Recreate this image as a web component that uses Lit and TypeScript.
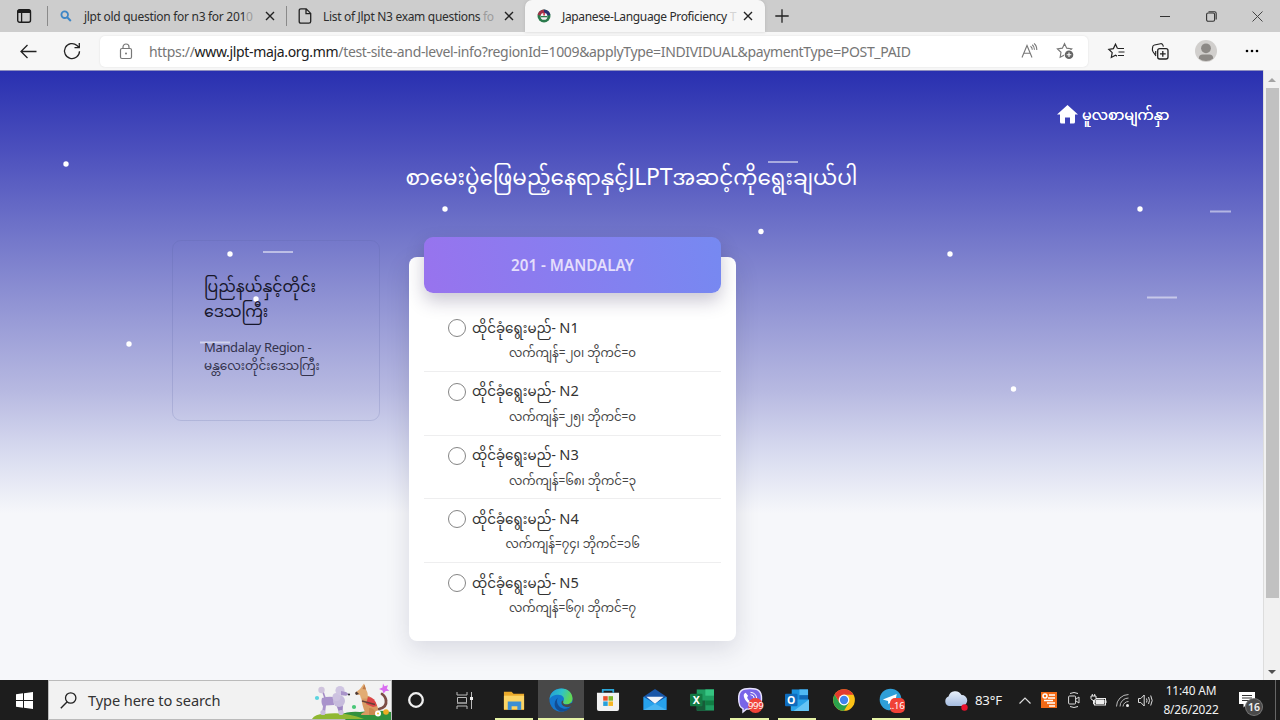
import { LitElement, html, css, svg } from "lit";
import { customElement } from "lit/decorators.js";

const base = css`
  :host, * { box-sizing: border-box; }
  svg { display: block; flex: none; overflow: visible; }
  .c { display: flex; align-items: center; justify-content: center; }
`;

const closeIcon = html`<svg width="10" height="10" viewBox="0 0 10 10"><path d="M1 1l8 8M9 1L1 9" stroke="#222" stroke-width="1.4"/></svg>`;

@customElement("browser-tabs")
class BrowserTabs extends LitElement {
  static styles = [base, css`
    :host { display: grid; grid-template-columns: 47px 1px 238px 1px 238px 240px 34px 1fr 46px 46px 46px; height: 32px; background: #cdcdcd; font: 12px "Noto Sans", sans-serif; color: #2d2d2d; align-items: center; }
    .sep { width: 1px; height: 20px; background: #8a8a8a; }
    .tab { display: grid; grid-template-columns: 36px 174px 24px; height: 32px; align-items: center; }
    .label { white-space: nowrap; }
    .fade { color: #9c9c9c; }
    .l1 { letter-spacing: -0.29px; }
    .l2 { letter-spacing: -0.31px; }
    .l3 { letter-spacing: -0.36px; padding-left: 1px; }
    .active { grid-template-columns: 37px 174px 24px; background: #f7f7f7; border-radius: 7px 7px 0 0; box-shadow: 0 0 3px #9997; }
    .active .fade { color: #d4d4d4; }
    .active .label { padding-left: 0; }
  `];
  render() {
    return html`
      <div class="c"><svg width="16" height="16" viewBox="0 0 16 16"><rect x="1.7" y="1.7" width="12.8" height="12.6" rx="2" fill="none" stroke="#1c1c1c" stroke-width="1.4"/><path d="M1.5 5V3q0-1.5 1.5-1.5h10q1.500 0 1.500 1.500v2z" fill="#1c1c1c"/><path d="M5.6 5v9" stroke="#1c1c1c" stroke-width="1.3"/></svg></div>
      <span class="sep"></span>
      <div class="tab"><div class="c"><svg width="12" height="12" viewBox="0 0 12 12"><circle cx="4.7" cy="4.7" r="3.3" fill="none" stroke="#3d86c6" stroke-width="1.8"/><path d="M7.2 7.2l3.6 3.8" stroke="#3d86c6" stroke-width="2"/></svg></div><span class="label l1">jlpt old question for n3 for 201<span class="fade">0</span></span><div class="c">${closeIcon}</div></div>
      <span class="sep"></span>
      <div class="tab"><div class="c"><svg width="14" height="16" viewBox="0 0 14 16"><path d="M1.2 2.500q0-1.700 1.700-1.700h5.300l4.500 4.600v8q0 1.800-1.800 1.800h-8q-1.700 0-1.700-1.800zM8 1v4.700h4.700" fill="none" stroke="#222" stroke-width="1.3"/></svg></div><span class="label l2">List of Jlpt N3 exam questions <span class="fade">fo</span></span><div class="c">${closeIcon}</div></div>
      <div class="tab active"><div class="c"><svg width="14" height="14" viewBox="0 0 14 14"><circle cx="7" cy="7" r="6.500" fill="#2a7a4c"/><path d="M.8 6A6.300 6.300 0 0 1 7 .5V7z" fill="#a33049"/><path d="M7 .5A6.300 6.300 0 0 1 13.300 6L7 7z" fill="#2c3273"/><circle cx="7" cy="7.400" r="3.400" fill="#f3f3f3"/><path d="M3.800 7h6.400v1.300H3.800z" fill="#2a7a4c"/><path d="M6.300 3.500h1.600v3H6.300z" fill="#c34"/></svg></div><span class="label l3">Japanese-Language Proficiency <span class="fade">T</span></span><div class="c">${closeIcon}</div></div>
      <div class="c"><svg width="14" height="14" viewBox="0 0 14 14"><path d="M7 .3v13.400M.3 7h13.400" stroke="#222" stroke-width="1.3"/></svg></div>
      <span></span>
      <div class="c"><svg width="10" height="10"><path d="M0 5.500h10" stroke="#333"/></svg></div>
      <div class="c"><svg width="11" height="11" viewBox="0 0 11 11"><rect x=".6" y="2" width="8" height="8.200" rx="1.500" fill="none" stroke="#333" stroke-width="1.100"/><path d="M2.500 .8h6q1.700 0 1.700 1.700v6" fill="none" stroke="#333" stroke-width="1.100"/></svg></div>
      <div class="c"><svg width="11" height="11" viewBox="0 0 11 11"><path d="M.5.5l10 10M10.500.5l-10 10" stroke="#444" stroke-width="1"/></svg></div>`;
  }
}

const star = "M7 1l1.900 3.900 4.300.6-3.100 3 .7 4.300L7 10.800l-3.800 2 .7-4.300-3.100-3 4.300-.6z";

@customElement("browser-toolbar")
class BrowserToolbar extends LitElement {
  static styles = [base, css`
    :host { display: grid; grid-template-columns: 56px 44px 988px 56px 33px 58px 34px; height: 39px; background: #f7f7f7; border-bottom: 1px solid #b9b9c4; align-items: center; font-family: "Noto Sans", sans-serif; }
    .url { display: grid; grid-template-columns: 49px 1fr 36px 36px 5px; height: 31px; background: #fff; border-radius: 5px; align-items: center; font-size: 14px; color: #767676; box-shadow: 0 0 2px #ddd; }
    .text { white-space: nowrap; letter-spacing: -0.335px; }
    .text b { font-weight: 400; color: #202020; }
    .lock { padding-left: 2px; }
    .reload { padding-right: 12px; }
  `];
  render() {
    return html`
      <div class="c"><svg width="17" height="15" viewBox="0 0 17 15"><path d="M16.500 7.500H1M7.500 1L1 7.500 7.500 14" fill="none" stroke="#222" stroke-width="1.300"/></svg></div>
      <div class="c reload"><svg width="18" height="18" viewBox="0 0 18 18"><path d="M16.500 9.200A7.500 7.500 0 1 1 14 3.500l2 1.900M16.300 1v4.600h-4.800" fill="none" stroke="#222" stroke-width="1.300"/></svg></div>
      <div class="url">
        <div class="c lock"><svg width="14" height="17" viewBox="0 0 14 17"><rect x="1.500" y="5.500" width="11" height="10" rx="1.500" fill="none" stroke="#777" stroke-width="1.200"/><path d="M4 5.500V4a3 3 0 0 1 6 0v1.500" fill="none" stroke="#777" stroke-width="1.200"/><circle cx="7" cy="10.500" r="1" fill="#777"/></svg></div>
        <span class="text">https://<b>www.jlpt-maja.org.mm</b>/test-site-and-level-info?regionId=1009&amp;applyType=INDIVIDUAL&amp;paymentType=POST_PAID</span>
        <div class="c"><svg width="17" height="16" viewBox="0 0 17 16"><path d="M1 14.500L6 2.500l5 12M2.800 10.300h6.400M9.500 3.200q1.800 1.200 1.800 3.500M11.200 1.800q2.300 1.500 2.300 5M13 .5q2.800 2 2.800 6.500" fill="none" stroke="#777" stroke-width="1.100"/></svg></div>
        <div class="c"><svg width="18" height="18" viewBox="0 0 18 18"><path transform="translate(.5 .5) scale(1.150)" d=${star} fill="none" stroke="#777"/><circle cx="13" cy="12.800" r="5.200" fill="#fff"/><circle cx="13" cy="12.800" r="4.300" fill="#666"/><path d="M13 10.500v4.600M10.700 12.800h4.600" stroke="#fff" stroke-width="1.100"/></svg></div>
      </div>
      <div class="c"><svg width="17" height="17" viewBox="0 0 17 17"><path d="M9.500 5.500L7.500 1.200 5.400 5.600.8 6.300 4.200 9.600l-.9 4.900 4.200-2.200 1.500.8" fill="none" stroke="#222" stroke-width="1.200"/><path d="M9.500 5.500H16M10.500 9H16.500M10 12.500H16" stroke="#222" stroke-width="1.200"/></svg></div>
      <div class="c"><svg width="17" height="17" viewBox="0 0 17 17"><rect x="5.700" y="5.700" width="10.300" height="10.300" rx="2" fill="none" stroke="#222" stroke-width="1.300"/><path d="M10.800 8v5.800M8 10.800h5.700" fill="none" stroke="#222" stroke-width="1.300"/><path d="M4 13L1.200 9Q.2 7.500.4 6L.8 3.500Q1 2.300 2.500 2L8.500.7q1.700-.3 2.300 1.200l.6 1.700M3.700 11.500V8" fill="none" stroke="#222" stroke-width="1.150"/></svg></div>
      <div class="c"><svg width="22" height="22" viewBox="0 0 22 22"><circle cx="11" cy="11" r="11" fill="#d1cfcd"/><circle cx="11" cy="8.300" r="4.900" fill="#8c8986"/><path d="M3.800 18.500q0-4 4-4h6.400q4 0 4 4Q15 21 11 21t-7.200-2.500z" fill="#8c8986"/></svg></div>
      <div class="c"><svg width="14" height="4"><circle cx="2" cy="2" r="1.300"/><circle cx="7" cy="2" r="1.300"/><circle cx="12" cy="2" r="1.300"/></svg></div>`;
  }
}

const levels = [
  ["N1", "လက်ကျန်=၂၀၊ ဘိုကင်=၀"],
  ["N2", "လက်ကျန်=၂၅၊ ဘိုကင်=၀"],
  ["N3", "လက်ကျန်=၆၈၊ ဘိုကင်=၃"],
  ["N4", "လက်ကျန်=၇၄၊ ဘိုကင်=၁၆"],
  ["N5", "လက်ကျန်=၆၇၊ ဘိုကင်=၇"],
];
const dots = [[66, 93], [445, 138], [761, 160.500], [230, 183], [950, 183], [1140, 138], [129, 273], [1013.500, 318], [256, 228]];
const dashes = [[768, 91, 30], [1210, 140.500, 21], [263, 181, 30], [1147, 226.500, 30], [200, 271.500, 30]];

@customElement("exam-page")
class ExamPage extends LitElement {
  static styles = [base, css`
    :host { display: grid; grid-template-columns: 1263px 17px; height: 610px; margin-top: -1px; font-family: "Noto Sans", "Noto Sans Myanmar", sans-serif; }
    .page { position: relative; overflow: hidden; border-top: 1px solid #8f90bf; background: linear-gradient(180deg, #2930b0 0, #4c50bd 80px, #7074c9 160px, #9497d5 240px, #b7b9e1 320px, #d7daef 380px, #f6f7fa 442px); }
    .sky { position: absolute; inset: 0; }
    .content { position: relative; display: flex; flex-direction: column; }
    .home { display: flex; gap: 4px; align-items: center; height: 30px; margin: 28px 0 0 1057px; color: #fff; font-size: 14.400px; white-space: nowrap; }
    .home-text { padding-top: 5px; text-shadow: 0 0 .5px #fff; }
    .title { display: flex; align-items: center; justify-content: center; height: 40px; margin: 31px 0 0; color: #fff; font-size: 21.500px; font-weight: 400; white-space: nowrap; }
    .jlpt { font-size: 23px; letter-spacing: -.3px; }
    .columns { display: flex; align-items: flex-start; gap: 29px; padding: 37px 0 0 172px; }
    .region { width: 208px; height: 181px; margin-top: 3px; border: 1px solid #5560a030; border-radius: 9px; padding: 33px 20px 0 31px; color: #17172b; }
    .region h2 { margin: 0; font-size: 15.750px; font-weight: 400; line-height: 25px; white-space: nowrap; }
    .region p { margin: 14px 0 0; font-size: 12.050px; line-height: 18px; color: #33334d; white-space: nowrap; }
    .latin { font-size: 13px; letter-spacing: -.35px; }
    .card { width: 327px; height: 384px; margin-top: 20px; padding: 0 15px; background: #fff; border-radius: 8px; box-shadow: 0 8px 24px #20204022; }
    .head { height: 56px; margin-top: -20px; border-radius: 9px; background: linear-gradient(75deg, #9873ee, #7689f1); color: #e4defc; font-size: 15.200px; font-weight: 600; box-shadow: 0 8px 18px #2a205040; }
    .list { padding-top: 15px; }
    .level { height: 63.750px; border-bottom: 1px solid #eeeeef; padding-top: 8px; color: #333; }
    .level:last-child { border: 0; }
    .option { display: flex; align-items: center; gap: 6px; padding-left: 24px; height: 24px; font-size: 13.500px; white-space: nowrap; }
    .choice { line-height: 22px; padding-bottom: 2px; }
    .code { font-size: 14.600px; }
    .radio { width: 18px; height: 18px; border: 1px solid #858585; border-radius: 50%; }
    .count { text-align: center; height: 22px; line-height: 24px; font-size: 11.800px; white-space: nowrap; color: #444; }
    .scroll { background: #f1f1f1; border-left: 1px solid #ddd; display: flex; flex-direction: column; align-items: center; justify-content: space-between; padding-top: 1px; }
    .thumb { width: 13px; height: 510px; background: #c1c1c1; margin-bottom: 65px; }
    .arrow { height: 17px; }
  `];
  render() {
    return html`
      <div class="page">
        <svg class="sky" width="1263" height="609">
          ${dots.map(([x, y]) => svg`<circle cx=${x} cy=${y} r="2.700" fill="#fff"/>`)}
          ${dashes.map(([x, y, w]) => svg`<rect x=${x} y=${y - 1} width=${w} height="2" fill="#fff" opacity=".5"/>`)}
        </svg>
        <div class="content">
          <div class="home"><svg width="21" height="19" viewBox="0 0 21 19"><path d="M10.500 0L21 9.500H18V17q0 1.500-1.500 1.500H13V12.500H8v6H4.500Q3 18.500 3 17V9.500H0z" fill="#fff"/></svg><span class="home-text">မူလစာမျက်နှာ</span></div>
          <h1 class="title"><span>စာမေးပွဲဖြေမည့်နေရာနှင့်<span class="jlpt">JLPT</span>အဆင့်ကိုရွေးချယ်ပါ</span></h1>
          <div class="columns">
            <div class="region"><h2>ပြည်နယ်နှင့်တိုင်း<br>ဒေသကြီး</h2><p><span class="latin">Mandalay Region -</span><br>မန္တလေးတိုင်းဒေသကြီး</p></div>
            <div class="card">
              <div class="head c">201 - MANDALAY</div>
              <div class="list">${levels.map(([n, t]) => html`<div class="level"><div class="option"><span class="radio"></span><span class="choice">ထိုင်ခုံရွေးမည်- <span class="code">${n}</span></span></div><div class="count">${t}</div></div>`)}</div>
            </div>
          </div>
        </div>
      </div>
      <div class="scroll"><div class="arrow c"><svg width="8" height="4"><path d="M0 4L4 0l4 4z" fill="#a3a3a3"/></svg></div><div class="thumb"></div><div class="arrow c"><svg width="8" height="4"><path d="M0 0l4 4 4-4z" fill="#505050"/></svg></div></div>`;
  }
}

const appIcons = [
  { on: true, art: svg`<path d="M2 4h8l2 2h11v17H2z" fill="#e9a92a"/><path d="M2 8h21v14H2z" fill="#fbd465"/><path d="M6 23v-9h14v9h-4v-4h-6v4z" fill="#3c8fd4"/>` },
  { on: true, active: true, art: svg`<defs><linearGradient id="e" x1="0" y1="0" x2="1" y2=".3"><stop offset="0" stop-color="#2398d8"/><stop offset=".55" stop-color="#2fc2c8"/><stop offset="1" stop-color="#62d854"/></linearGradient></defs><circle cx="12.500" cy="12.500" r="12" fill="#1477ce"/><path d="M.6 12C1 4 7 .5 13 .5c7 0 11.500 5 11.500 10.500 0 4-3 6-6.500 6-3.500 0-4-2-3-3.500 2-3-1-6.500-5-6.500C5 7 1.500 9 .6 12z" fill="url(#e)"/><path d="M9.500 10c-3 4 0 11 6 11.500 3 .3 5.500-.8 7.500-2.500-2 4-6.500 6-11 5.500C6 23 3 15 9.500 10z" fill="#124d94"/><path d="M15 13.500c-1 2 .5 4.500 5 3.500l3.500-1.300c1.500 0 1.200 1.500 0 2.800-4 3-10 1-10.500-2.500-.3-2 1-4 2-2.500z" fill="#484848"/>` },
  { art: svg`<path d="M1 5h23v17q0 2-2 2H3q-2 0-2-2z" fill="#f2f2f2"/><path d="M7 5V2h11v3" fill="none" stroke="#2ba7da" stroke-width="1.800"/><path d="M7.500 8.500h4.700v4.700H7.500z" fill="#e9502b"/><path d="M13 8.500h4.700v4.700H13z" fill="#7eb728"/><path d="M7.500 14h4.700v4.700H7.500z" fill="#27a0da"/><path d="M13 14h4.700v4.700H13z" fill="#f7b622"/>` },
  { art: svg`<path d="M.5 9L12.500 1l12 8v14H.5z" fill="#1856a8"/><path d="M.5 9l12 7.500L24.500 9v14H.5z" fill="#27a2ec"/><path d="M3.500 9h18l-9 7.500z" fill="#f2f5fa"/><path d="M.5 23l12-6.500 12 6.500z" fill="#4ab5f2"/>` },
  { art: svg`<path d="M7 1.500h18v22H7z" fill="#1f9d61"/><path d="M16 1.500h9V8h-9z" fill="#35c481"/><path d="M7 13h9v10H7z" fill="#175c38"/><path d="M16 13h9v5h-9z" fill="#107c43"/><rect x="0" y="6" width="13" height="13" rx="1" fill="#137a43"/><text x="6.500" y="16.500" font-size="11" font-weight="700" text-anchor="middle" fill="#fff">X</text>` },
  { on: true, badge: "999", art: svg`<path d="M12.500.5C4 .5.700 3 .700 11s2 9.500 4.500 10.500V25l3.500-3H13c8.500 0 11.500-3 11.500-11S21 .5 12.500.5z" fill="#7865e8" stroke="#e9e4ff" stroke-width="1.500"/><path d="M8 5l2.500 3-1 2q1.500 4 5 5l1.500-1.500 3.500 2.500q-1.500 3-4 2.500C10 16.500 5.500 11 6 7q.5-1.500 2-2z" fill="#fff"/><path d="M13 4.500q6 .5 6.500 6.500M13 7q3.500 0 4 4" fill="none" stroke="#fff"/>` },
  { on: true, art: svg`<path d="M7 1.500h17v12H7z" fill="#1a91df"/><path d="M15 1.500h9v6h-9z" fill="#50b8f2"/><path d="M15 7.500h9v6h-9z" fill="#1269b6"/><path d="M13 12h12v11q0 1-1 1H7q-1 0-1-1v-7z" fill="#2aa4ea"/><path d="M9 24L25 12v11q0 1-1 1z" fill="#66c5f5"/><rect x="0" y="6" width="13" height="13" rx="1" fill="#0f6cbd"/><text x="6.500" y="16.500" font-size="11" font-weight="700" text-anchor="middle" fill="#fff">O</text>` },
  { art: svg`<circle cx="12.500" cy="12.500" r="11.300" fill="#fbc116"/><path d="M12.500 7h9.900A11.300 11.300 0 0 0 2.700 6.900l5 8.300z" fill="#e33b2e"/><path d="M2.700 6.900a11.300 11.300 0 0 0 9.800 16.900l5-8.500-9.800 0z" fill="#2ba24c"/><circle cx="12.500" cy="12.500" r="5.600" fill="#fff"/><circle cx="12.500" cy="12.500" r="4.300" fill="#4084ee"/>` },
  { on: true, badge: "..16", art: svg`<circle cx="12" cy="12" r="11.300" fill="#2f9fd8"/><path d="M4 12L18.500 6.300 16 18l-4-3-2.300 2-.3-3.500z" fill="#fff"/>` },
];

@customElement("task-bar")
class TaskBar extends LitElement {
  static styles = [base, css`
    :host { display: grid; grid-template-columns: 48px 344px 48px 48px 1fr; height: 40px; background: #1d1d1d; font-family: "Noto Sans", sans-serif; color: #f2f2f2; align-items: center; }
    .search { height: 40px; background: #f2f2f2; border: 1px solid #bbb; display: grid; grid-template-columns: 39px 1fr 79px; align-items: center; color: #333; font-size: 14.600px; letter-spacing: -.1px; }
    .apps { display: grid; grid-template-columns: repeat(9, 47.200px); height: 40px; padding-left: 2px; }
    .app { position: relative; height: 40px; display: flex; align-items: center; justify-content: center; }
    .on::after { content: ""; position: absolute; bottom: 0; left: 4.500px; right: 4.500px; height: 2px; background: #e6f3a6; }
    .active { background: #484848; margin: 0 .5px; }
    .active::after { left: 0; right: 0; }
    .badge { position: absolute; left: 22px; top: 18px; min-width: 15px; height: 15px; line-height: 15px; border-radius: 5px; background: #f14237; color: #fff; font-size: 9.500px; text-align: center; letter-spacing: -.3px; }
    .round { border-radius: 8px; }
  `];
  render() {
    return html`
      <div class="c"><svg width="17" height="17" viewBox="0 0 17 17"><path d="M0 2.300L7 1.300V8H0zM8 1.200L17 0v8H8zM0 9h7v6.700L0 14.700zM8 9h9v8l-9-1.200z" fill="#fff"/></svg></div>
      <div class="search"><div class="c"><svg width="17" height="17" viewBox="0 0 17 17"><circle cx="10.700" cy="6" r="5.200" fill="none" stroke="#222" stroke-width="1.300"/><path d="M7 10L.8 16.300" stroke="#222" stroke-width="1.400"/></svg></div><span>Type here to search</span>
        <svg width="79" height="38" viewBox="0 0 79 38">
          <path d="M28 34q8-4 20-3 18-3 31 0v8H34z" fill="#30913d"/><path d="M0 38q3-5 12-5 20-3 40 5z" fill="#8fb832"/>
          <circle cx="5" cy="17" r="2.100" fill="#5bd4df"/><circle cx="42" cy="26" r="2.100" fill="#49c777"/>
          <path d="M71 2.500l1.500 2.800 3.500-1-1.200 3.200 2.500 2.300-3.500.2-2.300 2.500-1-3-3.500-1.500 3.500-1.500z" fill="#d96cf0"/>
          <path d="M13 17l-2-6" stroke="#a48bc6" stroke-width="1.600"/><circle cx="9.500" cy="9" r="3.200" fill="#d0c4dd"/>
          <path d="M10 17q6-2 12-1v8l-8 .5q-.5 5-1.500 9H9.500l1.500-8q-2.500-4-1-8.500z" fill="#a993cb"/>
          <path d="M24 23h7l-.5 10h-3z" fill="#9d85c3"/>
          <circle cx="27" cy="20" r="6" fill="#c6bbdc"/><circle cx="24.500" cy="16" r="4" fill="#cdc2e0"/><circle cx="28" cy="9.500" r="4.600" fill="#d0c6e2"/>
          <path d="M29 10l5 1 3 2.300-3 1.500-5-.5z" fill="#a994c9"/><circle cx="37" cy="13.500" r="1.100" fill="#333"/>
          <circle cx="11" cy="31.500" r="2.600" fill="#c9bedd"/><circle cx="29" cy="31.500" r="2.600" fill="#c9bedd"/>
          <path d="M67 28q8-2 7-8 0-4-4-7" fill="none" stroke="#7b4d45" stroke-width="2.800" stroke-linecap="round"/>
          <path d="M49 14l8 1q7 5 9 12v7H49q0-2 4-3-3-6-4-17z" fill="#d99a62"/>
          <path d="M43.500 11.500l4.500-3.500 4-5.500 2 6q3 5 1 9h-6l-1-3.500-3.500-.5z" fill="#e2ac73"/><path d="M50.500 8l2-4.500 1.500 5z" fill="#bd7a48"/><path d="M43 12l1.500-1.500L47 13l-3 1z" fill="#4b3833"/>
          <path d="M56 16q7 0 9 9l-4 1-7-3z" fill="#db4547"/><path d="M50 20l13 3.500" stroke="#674039" stroke-width="1.300"/>
          <path d="M57 27q5-1 8 7h-8z" fill="#c98850"/>
          <circle cx="66" cy="32.500" r="3" fill="#fff"/><circle cx="66" cy="32.500" r="1" fill="#efc52f"/><circle cx="74" cy="31" r="2.800" fill="#eead23"/>
        </svg></div>
      <div class="c"><svg width="18" height="18"><circle cx="9" cy="9" r="6.800" fill="none" stroke="#f0f0f0" stroke-width="2.300"/></svg></div>
      <div class="c"><svg width="17" height="17" viewBox="0 0 17 17"><path d="M1 0v3h10V0M1 17v-3h10v3M1.500 5.500h9v6h-9zM15.500 0v17" fill="none" stroke="#bbb"/><path d="M1.500 10h9v2h-9z" fill="#888"/><path d="M14 5h3v3h-3z" fill="#eee"/></svg></div>
      <div class="apps">${appIcons.map((a: any) => html`<div class="app ${a.on ? "on" : ""} ${a.active ? "active" : ""}"><svg width="24" height="24" viewBox="0 0 25 25">${a.art}</svg>${a.badge ? html`<span class="badge ${a.badge === "999" ? "round" : ""}">${a.badge}</span>` : ""}</div>`)}</div>`;
  }
}

@customElement("system-tray")
class SystemTray extends LitElement {
  static styles = [base, css`
    :host { display: grid; grid-template-columns: 25px 46px 22px 26px 24px 24px 24px 22px 70px 49px 5px; height: 40px; background: #1d1d1d; font-family: "Noto Sans", sans-serif; color: #f2f2f2; align-items: center; }
    .weather { font-size: 13.200px; letter-spacing: -.2px; padding-left: 7px; white-space: nowrap; }
    .clock { font-size: 11.900px; line-height: 19px; text-align: center; letter-spacing: -.15px; white-space: nowrap; }
    .note { position: relative; height: 40px; padding: 12px 0 0 13px; }
    .num { position: absolute; left: 20px; top: 19px; width: 16px; height: 16px; line-height: 16px; border-radius: 50%; background: #4a4a4a; box-shadow: 0 0 0 1px #777; font-size: 10.500px; font-weight: 600; text-align: center; }
    .edge { height: 40px; border-left: 1px solid #666; }
  `];
  render() {
    return html`
      <div class="c"><svg width="24" height="22" viewBox="0 0 24 22"><defs><linearGradient id="w" x2="0" y2="1"><stop stop-color="#e9f1fb"/><stop offset="1" stop-color="#a5bce0"/></linearGradient></defs><path d="M5 17a5 5 0 0 1-.5-9.500A7 7 0 0 1 17.500 6 5.500 5.500 0 0 1 18 17z" fill="url(#w)"/><circle cx="20.500" cy="18.500" r="3.200" fill="#e8112d"/></svg></div>
      <span class="weather">83°F</span>
      <div class="c"><svg width="12" height="7"><path d="M.5 6.500L6 1l5.500 5.500" fill="none" stroke="#ddd" stroke-width="1.200"/></svg></div>
      <div class="c"><svg width="16" height="16"><rect width="16" height="16" fill="#f26a16"/><circle cx="4" cy="4" r="2" fill="none" stroke="#fff" stroke-width="1.500"/><path d="M8 3h6M7 6h7M3 8.500h9M6 11h8M8 14h6" stroke="#fff" stroke-width="1.600"/></svg></div>
      <div class="c"><svg width="12" height="16" viewBox="0 0 12 16"><rect x=".6" y="4" width="7" height="8" rx="1" fill="none" stroke="#ddd"/><path d="M8 7l3-2v6l-3-2M2 1.500q4-2 8 0M2 14.500q4 2 8 0" fill="none" stroke="#ddd"/></svg></div>
      <div class="c"><svg width="17" height="13" viewBox="0 0 17 13"><rect x="4.500" y="4.500" width="11" height="6.500" fill="none" stroke="#eee"/><path d="M6 6h8v3.500H6zM16 6.500v2.500" fill="#eee" stroke="#eee"/><path d="M1 2h5v2.500q-1 2-2.500 2T1 4.500zM2.300 0v2M4.700 0v2M3.500 6v4h1" fill="#1d1d1d" stroke="#eee"/></svg></div>
      <div class="c"><svg width="13" height="13" viewBox="0 0 13 13"><path d="M.5 12.500A12 12 0 0 1 12.500.5M4 12.500A8.500 8.500 0 0 1 12.500 4M7 12.500a5.500 5.500 0 0 1 5.500-5" fill="none" stroke="#bbb"/><circle cx="11.500" cy="11.500" r="1.500" fill="#eee"/></svg></div>
      <div class="c"><svg width="15" height="13" viewBox="0 0 15 13"><path d="M.5 4.500h2.300L6.200 1v11L2.800 8.500H.5zM8.500 4.500q1 2 0 4M10.500 3q2 3.500 0 7M12.700 1.500q3 5 0 10" fill="none" stroke="#ddd"/></svg></div>
      <div class="clock">11:40 AM<br>8/26/2022</div>
      <div class="note"><svg width="16" height="16" viewBox="0 0 16 16"><path d="M0 0h16v12H8l-3.500 3.500V12H0z" fill="#fff"/><path d="M3 3.500h10M3 6h10M3 8.500h7" stroke="#333" stroke-width="1"/></svg><span class="num">16</span></div>
      <div class="edge"></div>`;
  }
}

@customElement("app-root")
class AppRoot extends LitElement {
  static styles = css`
    :host { display: block; width: 1280px; height: 720px; overflow: hidden; background: #fff; }
    .bottom { display: grid; grid-template-columns: 943px 337px; height: 40px; background: #1d1d1d; }
  `;
  render() {
    return html`<browser-tabs></browser-tabs><browser-toolbar></browser-toolbar><exam-page></exam-page><div class="bottom"><task-bar></task-bar><system-tray></system-tray></div>`;
  }
}
